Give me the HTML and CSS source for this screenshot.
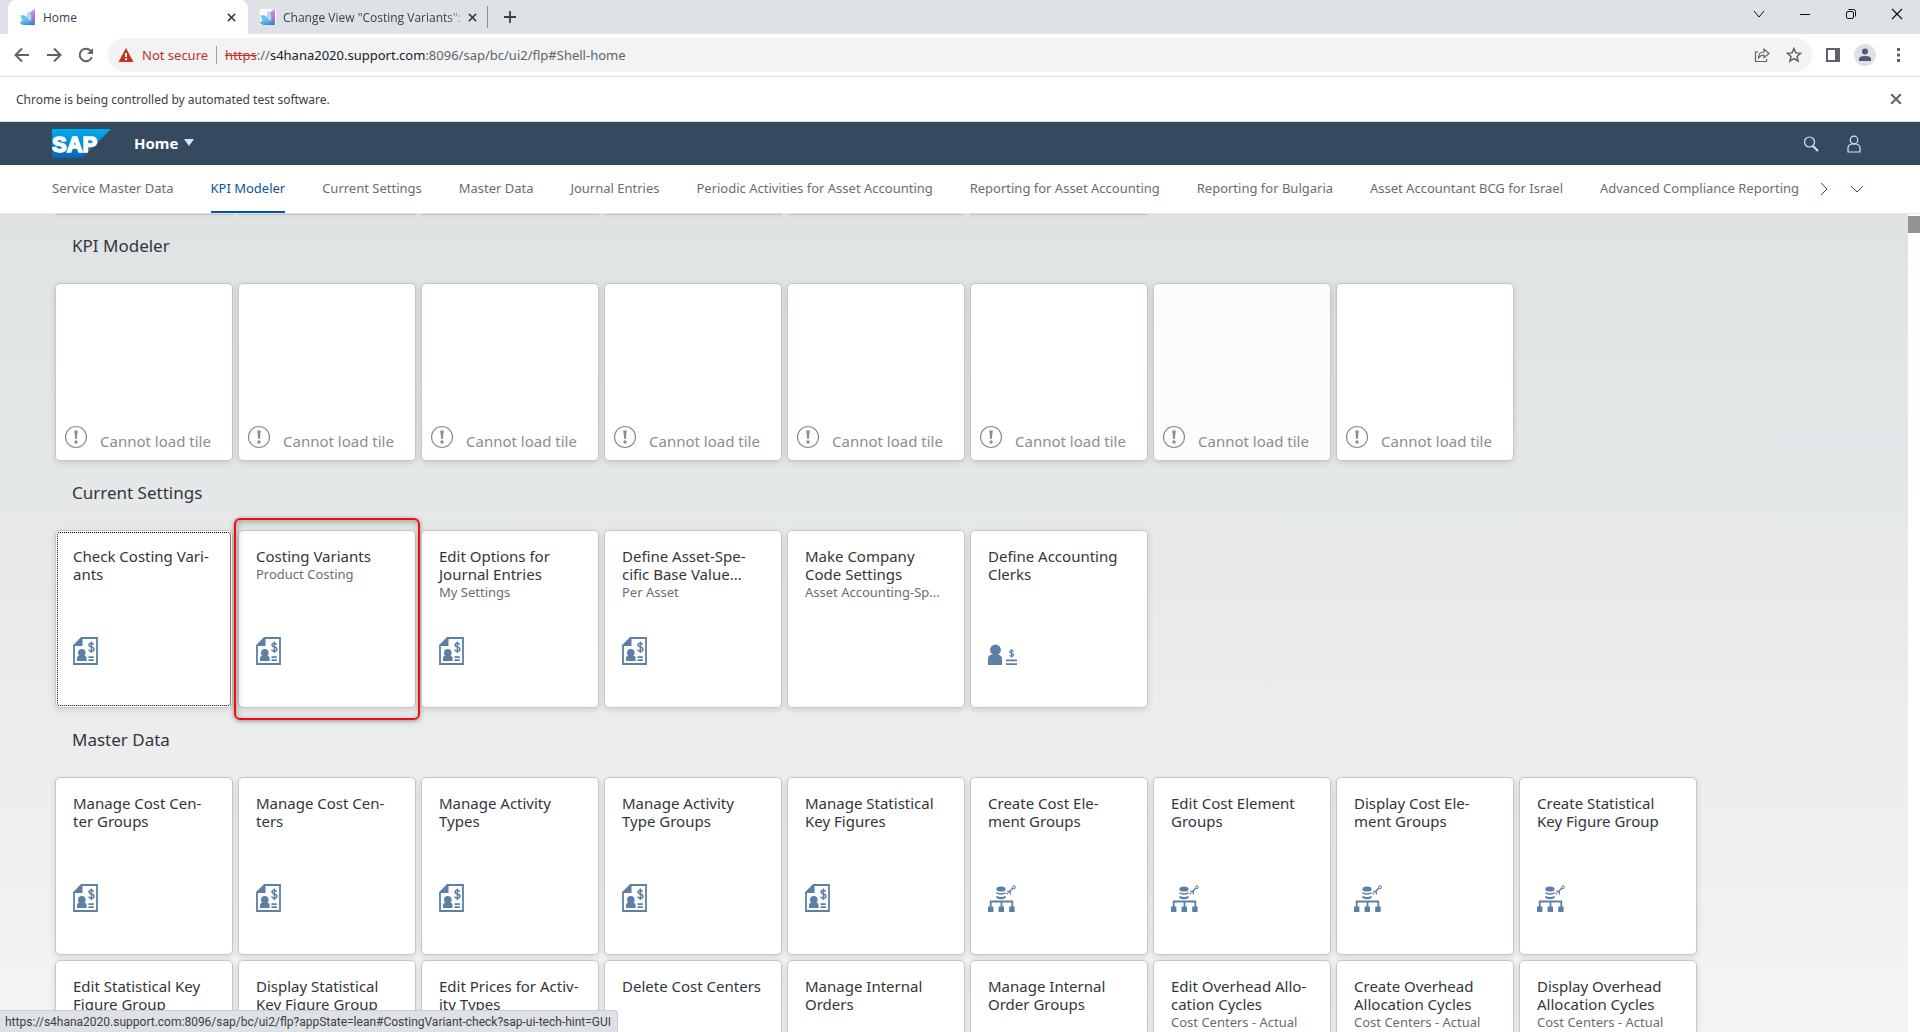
FILE: index.html
```html
<!DOCTYPE html>
<html lang="en">
<head>
<meta charset="utf-8">
<title>Home</title>
<link rel="stylesheet" href="styles.css">
</head>
<body>
<svg class="defs" aria-hidden="true">
  <defs>
    <linearGradient id="petalA" x1="0" y1="0" x2="1" y2="1"><stop offset="0" stop-color="#7fd6f2"/><stop offset="1" stop-color="#2f6fd0"/></linearGradient>
    <linearGradient id="petalB" x1="0" y1="0" x2="0" y2="1"><stop offset="0" stop-color="#c9a0e0"/><stop offset="0.6" stop-color="#b070c4"/><stop offset="1" stop-color="#3a86dc"/></linearGradient>
    <linearGradient id="sapBlue" x1="0" y1="0" x2="0" y2="1"><stop offset="0" stop-color="#00aeef"/><stop offset="1" stop-color="#0a63b5"/></linearGradient>
    <symbol id="favicon" viewBox="0 0 16 16">
      <path d="M15 0v16H7C7 8 9 2 15 0z" fill="url(#petalB)"/>
      <path d="M8 2c4 3 4 8 2 12C6 11 6 6 8 2z" fill="#a5dff5"/>
      <path d="M1 6c5 0 8 3 9 8-6 1-9-3-9-8z" fill="#6cc3ea"/>
      <path d="M0 13c3-3 9-3 12 0l2 3H4c-2 0-4-1-4-3z" fill="url(#petalA)"/>
    </symbol>
    <symbol id="close" viewBox="0 0 10 10"><path d="M1 1l8 8M9 1L1 9" fill="none" stroke="currentColor" stroke-width="1.7"/></symbol>
    <symbol id="alert" viewBox="0 0 24 24">
      <circle cx="12" cy="12" r="10.5" fill="none" stroke="currentColor" stroke-width="1.2"/>
      <path d="M10.2 5.5h3.6l-1 8.5h-1.6z" fill="currentColor"/><circle cx="12" cy="17" r="1.7" fill="currentColor"/>
    </symbol>
    <symbol id="doc" viewBox="0 0 25 28">
      <path d="M8.500 1H24v26H1V8.500z" fill="none" stroke="currentColor" stroke-width="1.800"/>
      <path d="M8.500 0H9.500v9H0V8.500z" fill="currentColor"/>
      <circle cx="8.800" cy="15.800" r="3.800" fill="currentColor"/>
      <path d="M4 24v-2.500q0-3 3-3h3.600q3 0 3 3V24z" fill="currentColor"/>
      <path d="M15.500 19.200h5.300v1.800h-5.300zM15.500 22.300h5.300v1.800h-5.300z" fill="currentColor"/>
      <path d="M20.600 7.600Q20 6.200 18.300 6.200q-2.300 0-2.300 1.900 0 1.500 2.400 2 2.500.6 2.500 2.200 0 2-2.500 2-2.200 0-2.700-1.700M18.400 4.600v11.400" fill="none" stroke="currentColor" stroke-width="1.500"/>
    </symbol>
    <symbol id="clerk" viewBox="0 0 30 22">
      <circle cx="7.500" cy="6" r="5.400" fill="currentColor"/>
      <path d="M0 21v-6q0-4 4-4.500h6q4 .5 4 4.500v6z" fill="currentColor"/>
      <path d="M18 15.500h11v1.800H18zM18 19.300h11v1.800H18z" fill="currentColor"/>
      <path d="M25.400 7.600q-.5-1-1.900-1-1.800 0-1.800 1.400 0 1 1.900 1.400t1.900 1.600q0 1.400-1.900 1.400-1.700 0-2.100-1.100M23.600 5.300v8.300" fill="none" stroke="currentColor" stroke-width="1.200"/>
    </symbol>
    <symbol id="tree" viewBox="0 0 28 28">
      <ellipse cx="13" cy="4" rx="4.600" ry="2.600" fill="currentColor"/>
      <path d="M8.400 7q4.600 2.400 9.200 0v1.600q-4.600 2.400-9.200 0z" fill="currentColor"/>
      <path d="M8.400 10.800q4.600 2.600 9.200 0v2.200q-4.600 2.600-9.200 0z" fill="currentColor"/>
      <path d="M2.700 22v-5.500H24.300V22M13.500 16.500V22" fill="none" stroke="currentColor" stroke-width="1.800"/>
      <path d="M0 21.500h5.400V27H0zM10.600 21.500H16V27h-5.400zM21.200 21.500h5.400V27h-5.400z" fill="currentColor"/>
      <path d="M20.500 7.500L25 3" stroke="currentColor" stroke-width="1.500"/>
      <circle cx="26" cy="2.200" r="1.400" fill="none" stroke="currentColor"/>
      <path d="M19.200 6.200l3 .5.300 2.800M19.800 9.200l-1.200-1.200" fill="none" stroke="currentColor" stroke-width="1.300"/>
    </symbol>
  </defs>
</svg>

<header class="browser">
  <div class="tabstrip">
    <div class="tab tab-active">
      <svg class="fav"><use href="#favicon"/></svg><span class="tab-label">Home</span>
      <button class="x" aria-label="Close tab"><svg><use href="#close"/></svg></button>
    </div>
    <div class="tab">
      <svg class="fav fav-tile"><use href="#favicon"/></svg><span class="tab-label tab-fade">Change View "Costing Variants":</span>
      <button class="x" aria-label="Close tab"><svg><use href="#close"/></svg></button>
    </div>
    <button class="newtab" aria-label="New tab"><svg width="14" height="14" viewBox="0 0 14 14"><path d="M7 1v12M1 7h12" stroke="currentColor" stroke-width="1.800"/></svg></button>
    <div class="winctl">
      <button aria-label="Search tabs"><svg width="12" height="12" viewBox="0 0 12 12"><path d="M1 3l5 6 5-6" fill="none" stroke="currentColor"/></svg></button>
      <button aria-label="Minimize"><svg width="12" height="12" viewBox="0 0 12 12"><path d="M1 6.500h10" stroke="currentColor"/></svg></button>
      <button aria-label="Restore"><svg width="12" height="12" viewBox="0 0 12 12"><rect x="1.500" y="3.500" width="7" height="7" rx="1.500" fill="none" stroke="currentColor"/><path d="M3.500 1.500h5q2 0 2 2v5" fill="none" stroke="currentColor"/></svg></button>
      <button aria-label="Close"><svg width="12" height="12" viewBox="0 0 12 12"><path d="M1 1l10 10M11 1L1 11" stroke="currentColor" stroke-width="1.200"/></svg></button>
    </div>
  </div>
  <div class="toolbar">
    <div class="history">
      <button aria-label="Back"><svg width="16" height="16" viewBox="0 0 16 16"><path d="M15 8H2M8 1.500L1.500 8 8 14.500" fill="none" stroke="currentColor" stroke-width="2"/></svg></button>
      <button aria-label="Forward"><svg width="16" height="16" viewBox="0 0 16 16"><path d="M1 8h13M8 1.500L14.500 8 8 14.500" fill="none" stroke="currentColor" stroke-width="2"/></svg></button>
      <button aria-label="Reload"><svg width="16" height="16" viewBox="0 0 16 16"><path d="M13.800 10A6.200 6.200 0 1 1 12.500 3.700L14 5.200" fill="none" stroke="currentColor" stroke-width="2"/><path d="M15 1v6H9z" fill="currentColor"/></svg></button>
    </div>
    <div class="omnibox">
      <svg width="16" height="16" viewBox="0 0 16 16"><path d="M8 1l7.500 14H.5z" fill="#c5301f"/><path d="M7 6h2v4H7zM7 11.300h2v2H7z" fill="#fff"/></svg>
      <span class="insecure">Not secure</span>
      <span class="url"><s>https</s>://<b>s4hana2020.support.com</b>:8096/sap/bc/ui2/flp#Shell-home</span>
      <button aria-label="Share"><svg width="16" height="16" viewBox="0 0 16 16"><path d="M4 5H1.500v9.500h11V12M4.500 11c0-4 2-6 5.500-6V2l5 4.500-5 4V8C7.500 8 6 9 4.500 11z" fill="none" stroke="currentColor" stroke-width="1.200"/></svg></button>
      <button aria-label="Bookmark"><svg width="16" height="16" viewBox="0 0 16 16"><path d="M8 1.500l1.900 4.400 4.700.4-3.600 3.100 1.100 4.700L8 11.600l-4.100 2.500L5 9.400 1.400 6.300l4.700-.4z" fill="none" stroke="currentColor" stroke-width="1.500"/></svg></button>
    </div>
    <button aria-label="Side panel"><svg width="14" height="14" viewBox="0 0 14 14"><path d="M1 1h12v12H1z" fill="none" stroke="currentColor" stroke-width="2"/><path d="M9 1h4v12H9z" fill="currentColor"/></svg></button>
    <button aria-label="Profile"><svg width="22" height="22" viewBox="0 0 22 22"><circle cx="11" cy="11" r="11" fill="#dee1e6"/><circle cx="11" cy="7.500" r="3" fill="#4f5b73"/><path d="M5 17v-2q0-3 6-3t6 3v2z" fill="#4f5b73"/></svg></button>
    <button class="menu" aria-label="Menu"><svg width="14" height="14" viewBox="0 0 14 14"><path d="M6 0h3v3H6zM6 5.500h3v3H6zM6 11h3v3H6z" fill="currentColor"/></svg></button>
  </div>
  <div class="infobar">
    <span>Chrome is being controlled by automated test software.</span>
    <button class="x x-large" aria-label="Dismiss"><svg><use href="#close"/></svg></button>
  </div>
</header>

<div class="shell">
  <svg class="sap" viewBox="0 0 59 29" role="img" aria-label="SAP"><path d="M0 0h59L30 29H0z" fill="url(#sapBlue)"/><text x="0" y="23" class="sap-text">SAP</text></svg>
  <button class="shell-title">Home <svg width="10" height="7" viewBox="0 0 10 7"><path d="M0 0h10L5 7z" fill="#d1e8ff"/></svg></button>
  <div class="shell-actions">
    <button aria-label="Search"><svg width="16" height="16" viewBox="0 0 16 16"><circle cx="6.500" cy="6" r="5" fill="none" stroke="currentColor" stroke-width="1.200"/><path d="M10 10l5 5" stroke="currentColor" stroke-width="2"/></svg></button>
    <button aria-label="User"><svg width="14" height="18" viewBox="0 0 14 18"><circle cx="7" cy="5" r="3.800" fill="none" stroke="currentColor" stroke-width="1.200"/><path d="M1 17v-4q0-3 3.500-4h5Q13 10 13 13v4z" fill="none" stroke="currentColor" stroke-width="1.200"/></svg></button>
  </div>
</div>

<nav class="anchors">
  <a href="#service">Service Master Data</a>
  <a href="#kpi" class="current">KPI Modeler</a>
  <a href="#settings">Current Settings</a>
  <a href="#master">Master Data</a>
  <a href="#journal">Journal Entries</a>
  <a href="#periodic">Periodic Activities for Asset Accounting</a>
  <a href="#reporting">Reporting for Asset Accounting</a>
  <a href="#bulgaria">Reporting for Bulgaria</a>
  <a href="#israel">Asset Accountant BCG for Israel</a>
  <a href="#compliance">Advanced Compliance Reporting</a>
  <div class="anchor-controls">
    <button aria-label="Scroll right"><svg width="8" height="14" viewBox="0 0 8 14"><path d="M1 1l6 6-6 6" fill="none" stroke="currentColor"/></svg></button>
    <button aria-label="All groups"><svg width="14" height="8" viewBox="0 0 14 8"><path d="M1 1l6 6 6-6" fill="none" stroke="currentColor"/></svg></button>
  </div>
</nav>

<div class="viewport">
<main class="canvas">
  <div class="sliver"><i></i><i></i><i></i><i></i><i></i><i></i></div>
  <section>
    <h2>KPI Modeler</h2>
    <div class="tiles">
      <a href="#t" class="tile failed"><svg><use href="#alert"/></svg>Cannot load tile</a>
      <a href="#t" class="tile failed"><svg><use href="#alert"/></svg>Cannot load tile</a>
      <a href="#t" class="tile failed"><svg><use href="#alert"/></svg>Cannot load tile</a>
      <a href="#t" class="tile failed"><svg><use href="#alert"/></svg>Cannot load tile</a>
      <a href="#t" class="tile failed"><svg><use href="#alert"/></svg>Cannot load tile</a>
      <a href="#t" class="tile failed"><svg><use href="#alert"/></svg>Cannot load tile</a>
      <a href="#t" class="tile failed hovered"><svg><use href="#alert"/></svg>Cannot load tile</a>
      <a href="#t" class="tile failed"><svg><use href="#alert"/></svg>Cannot load tile</a>
    </div>
  </section>
  <section>
    <h2>Current Settings</h2>
    <div class="tiles">
      <a href="#t" class="tile focused"><h3>Check Costing Vari&shy;ants</h3><svg class="doc"><use href="#doc"/></svg></a>
      <a href="#t" class="tile marked"><h3>Costing Variants</h3><p>Product Costing</p><svg class="doc"><use href="#doc"/></svg></a>
      <a href="#t" class="tile"><h3>Edit Options for Journal Entries</h3><p>My Settings</p><svg class="doc"><use href="#doc"/></svg></a>
      <a href="#t" class="tile"><h3>Define Asset-Spe&shy;cific Base Value...</h3><p>Per Asset</p><svg class="doc"><use href="#doc"/></svg></a>
      <a href="#t" class="tile"><h3>Make Company Code Settings</h3><p>Asset Accounting-Sp...</p></a>
      <a href="#t" class="tile"><h3>Define Accounting Clerks</h3><svg class="clerk"><use href="#clerk"/></svg></a>
    </div>
  </section>
  <section>
    <h2>Master Data</h2>
    <div class="tiles">
      <a href="#t" class="tile"><h3>Manage Cost Cen&shy;ter Groups</h3><svg class="doc"><use href="#doc"/></svg></a>
      <a href="#t" class="tile"><h3>Manage Cost Cen&shy;ters</h3><svg class="doc"><use href="#doc"/></svg></a>
      <a href="#t" class="tile"><h3>Manage Activity Types</h3><svg class="doc"><use href="#doc"/></svg></a>
      <a href="#t" class="tile"><h3>Manage Activity Type Groups</h3><svg class="doc"><use href="#doc"/></svg></a>
      <a href="#t" class="tile"><h3>Manage Statistical Key Figures</h3><svg class="doc"><use href="#doc"/></svg></a>
      <a href="#t" class="tile"><h3>Create Cost Ele&shy;ment Groups</h3><svg class="tree"><use href="#tree"/></svg></a>
      <a href="#t" class="tile"><h3>Edit Cost Element Groups</h3><svg class="tree"><use href="#tree"/></svg></a>
      <a href="#t" class="tile"><h3>Display Cost Ele&shy;ment Groups</h3><svg class="tree"><use href="#tree"/></svg></a>
      <a href="#t" class="tile"><h3>Create Statistical Key Figure Group</h3><svg class="tree"><use href="#tree"/></svg></a>
      <a href="#t" class="tile"><h3>Edit Statistical Key Figure Group</h3></a>
      <a href="#t" class="tile"><h3>Display Statistical Key Figure Group</h3></a>
      <a href="#t" class="tile"><h3>Edit Prices for Activ&shy;ity Types</h3></a>
      <a href="#t" class="tile"><h3>Delete Cost Centers</h3></a>
      <a href="#t" class="tile"><h3>Manage Internal Orders</h3></a>
      <a href="#t" class="tile"><h3>Manage Internal Order Groups</h3></a>
      <a href="#t" class="tile"><h3>Edit Overhead Allo&shy;cation Cycles</h3><p>Cost Centers - Actual</p></a>
      <a href="#t" class="tile"><h3>Create Overhead Allocation Cycles</h3><p>Cost Centers - Actual</p></a>
      <a href="#t" class="tile"><h3>Display Overhead Allocation Cycles</h3><p>Cost Centers - Actual</p></a>
    </div>
  </section>
</main>
<div class="scrollbar"><div class="thumb"></div></div>
</div>
<div class="status">https://s4hana2020.support.com:8096/sap/bc/ui2/flp?appState=lean#CostingVariant-check?sap-ui-tech-hint=GUI</div>
</body>
</html>
```
FILE: styles.css
```css
* { box-sizing: border-box; margin: 0; }
body {
  display: flex; flex-direction: column; height: 100vh; overflow: hidden;
  font-family: "Noto Sans", "Open Sans", sans-serif; font-size: 13px; color: #32363a; background: #fff;
}
button { border: 0; padding: 0; background: none; font: inherit; color: inherit; display: flex; align-items: center; justify-content: center; }
a { color: inherit; text-decoration: none; }
svg { flex: none; display: block; }
.defs { position: absolute; width: 0; height: 0; }

/* browser frame */
.browser { font-size: 12px; color: #3c4043; }
.tabstrip { display: flex; height: 34px; background: #dee1e6; padding-left: 8px; font-family: "Open Sans", sans-serif; }
.tab { display: flex; align-items: center; width: 240px; padding: 0 12px; gap: 7px; }
.tab:not(.tab-active) { border-right: 1px solid #8c9095; border-image: linear-gradient(#dee1e6 20%, #8c9095 20%, #8c9095 80%, #dee1e6 80%) 1; }
.tab-active { background: #fff; border-radius: 8px 8px 0 0; }
.tab-label { flex: 1; white-space: nowrap; }
.tab-fade { mask-image: linear-gradient(90deg, #000 92%, rgba(0, 0, 0, .3)); }
.fav { width: 16px; height: 16px; }
.fav-tile { background: #fff; }
.x { width: 10px; height: 16px; color: #3c4043; }
.x svg { width: 9px; height: 9px; }
.x-large { width: 12px; color: #5f6368; }
.x-large svg { width: 12px; height: 12px; }
.newtab { width: 44px; }
.winctl { display: flex; margin-left: auto; }
.winctl button { width: 46px; color: #111; height: 28px; }
.toolbar { display: flex; align-items: center; height: 43px; padding: 0 14px; gap: 14px; color: #5f6368; border-bottom: 1px solid #dadce0; }
.history { display: flex; gap: 16px; }
.menu { width: 16px; }
.omnibox { flex: 1; display: flex; align-items: center; gap: 8px; height: 34px; padding: 0 6px 0 10px; border-radius: 17px; background: #f1f3f4; font-size: 13px; }
.insecure { color: #c5301f; padding-right: 8px; border-right: 1px solid #9aa0a6; }
.url { flex: 1; }
.url s { color: #c5301f; }
.url b { font-weight: 400; color: #202124; }
.omnibox button { width: 24px; }
.infobar { display: flex; align-items: center; justify-content: space-between; height: 45px; padding: 0 18px 0 16px; border-bottom: 1px solid #d9dcde; }

/* launchpad shell */
.shell { display: flex; align-items: center; height: 43px; padding: 0 59px 0 52px; background: #354a5f; color: #fff; flex: none; }
.sap { width: 59px; height: 29px; }
.sap-text { font: 700 22px "Liberation Sans", sans-serif; fill: #fff; stroke: #fff; stroke-width: 1.5px; }
.shell-title { margin-left: 23px; padding-bottom: 2px; gap: 6px; font-size: 15px; font-weight: 700; }
.shell-actions { display: flex; gap: 28px; margin-left: auto; color: #d1e8ff; }

.anchors { display: flex; justify-content: space-between; height: 49px; padding: 0 56px 0 52px; color: #6a6d70; border-bottom: 1px solid #e4e7e8; flex: none; white-space: nowrap; }
.anchors a { display: flex; align-items: center; border-bottom: 2px solid transparent; }
.anchors .current { color: #0854a0; border-color: #0854a0; }
.anchor-controls { display: flex; gap: 22px; margin-left: -16px; color: #0854a0; }

.viewport { flex: 1; min-height: 0; display: flex; }
.canvas { flex: 1; overflow: hidden; padding: 0 40px 0 55px; background: linear-gradient(#dfe3e4, #e8eaec 50%, #f2f4f5); }
.scrollbar { width: 12px; background: #fff; padding-top: 2px; }
.thumb { height: 17px; background: #949494; }
.sliver { display: flex; gap: 5px; height: 0; }
.sliver i { flex: none; width: 178px; height: 1px; background: #bfc3c4; box-shadow: 0 1px 5px rgba(0, 0, 0, .15); }
.tiles { display: flex; flex-wrap: wrap; gap: 5px; }
.canvas h2 { height: 69px; padding: 19px 17px 0; font-size: 17px; line-height: 26px; font-weight: 400; }
.tile {
  position: relative; width: 178px; height: 178px; padding: 16px 17px; background: #fff;
  border: 1px solid #c4c7c9; border-radius: 5px; box-shadow: 0 2px 6px rgba(0, 0, 0, .12);
}
.tile h3 { font-size: 15px; line-height: 18px; font-weight: 400; }
.tile p { font-size: 13px; line-height: 18px; color: #6a6d70; white-space: nowrap; }
.tile:not(.failed) svg { position: absolute; left: 17px; color: #5c7fa5; }
.doc { width: 25px; height: 28px; bottom: 42px; }
.clerk { width: 30px; height: 22px; bottom: 41px; }
.tree { width: 28px; height: 28px; bottom: 41px; }
.failed { display: flex; align-items: flex-end; gap: 12px; padding: 0 0 9px 8px; font-size: 15px; color: #8b8d8f; }
.failed svg { width: 24px; height: 24px; margin-bottom: 2px; }
.hovered { background: #fcfcfc; }
.focused { outline: 1px dotted #000; outline-offset: -3px; }
.marked::after {
  content: ""; position: absolute; inset: -13px -5px; border: 2px solid #f60c0c; border-radius: 6px;
  box-shadow: 0 1px 5px rgba(0, 0, 0, .4), inset 1px 2px 7px rgba(0, 0, 0, .3);
}
.status { position: fixed; left: 0; bottom: 0; height: 22px; padding: 0 6px 0 5px; font: 12px/22px Roboto, sans-serif; color: #3c4043; background: #dee1e6; border: 1px solid #cbced3; border-width: 1px 1px 0 0; border-radius: 0 4px 0 0; }
```
